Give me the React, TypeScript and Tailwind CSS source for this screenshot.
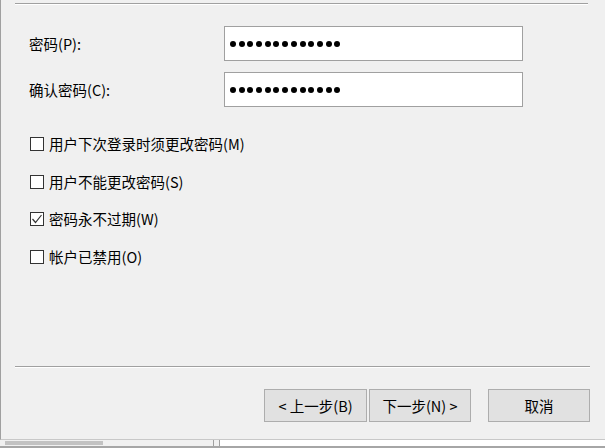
import React from "react";

const font = { fontFamily: '"Noto Sans CJK SC", "Noto Sans", sans-serif' };

function Dots() {
  return (
    <div className="flex items-center gap-[2.7px] pl-[5px]">
      {Array.from({ length: 13 }).map((_, i) => (
        <div key={i} className="w-[6px] h-[6px] rounded-full bg-black" />
      ))}
    </div>
  );
}

function Check({ checked, label }: { checked?: boolean; label: string }) {
  return (
    <div className="flex items-center h-[20px] pl-[29px]">
      <div className="w-[14px] h-[14px] border border-[#333333] bg-white flex items-center justify-center">
        {checked && (
          <svg width="12" height="12" viewBox="0 0 12 12">
            <polyline points="1.5,6 4.5,9.5 10.5,2" fill="none" stroke="#333333" strokeWidth="1.2" />
          </svg>
        )}
      </div>
      <span className="ml-[5px] text-[14.5px] text-black leading-none">{label}</span>
    </div>
  );
}

export default function App() {
  return (
    <div className="w-[605px] h-[448px] bg-[#f0f0f0] flex flex-col overflow-hidden" style={font}>
      <div className="h-[440px] border-l border-b border-l-[#a0a0a0] border-b-[#c8c8c8] flex flex-col">
        <div className="mt-[3px] ml-[14px] w-[573px] h-[2px] border-t border-[#a0a0a0] border-b border-b-white" />
        <div className="mt-[21px] flex items-center h-[35px]">
          <div className="w-[223px] pl-[28px] text-[14.5px] text-black">密码(P):</div>
          <div className="w-[299px] h-[35px] bg-white border border-[#a0a0a0] flex items-center">
            <Dots />
          </div>
        </div>
        <div className="mt-[11px] flex items-center h-[35px]">
          <div className="w-[223px] pl-[28px] text-[14.5px] text-black">确认密码(C):</div>
          <div className="w-[299px] h-[35px] bg-white border border-[#a0a0a0] flex items-center">
            <Dots />
          </div>
        </div>
        <div className="mt-[27px]">
          <Check label="用户下次登录时须更改密码(M)" />
        </div>
        <div className="mt-[18px]">
          <Check label="用户不能更改密码(S)" />
        </div>
        <div className="mt-[17px]">
          <Check checked label="密码永不过期(W)" />
        </div>
        <div className="mt-[18px]">
          <Check label="帐户已禁用(O)" />
        </div>
        <div className="mt-[99px] ml-[14px] w-[575px] h-[2px] border-t border-[#a0a0a0] border-b border-b-white" />
        <div className="mt-[21px] ml-[263px] flex">
          <button className="w-[103px] h-[33px] bg-[#e1e1e1] border border-[#adadad] text-[14.5px] text-black">
            &lt; 上一步(B)
          </button>
          <button className="ml-[2px] w-[102px] h-[33px] bg-[#e1e1e1] border border-[#adadad] text-[14.5px] text-black">
            下一步(N) &gt;
          </button>
          <button className="ml-[17px] w-[102px] h-[33px] bg-[#e1e1e1] border border-[#adadad] text-[14.5px] text-black">
            取消
          </button>
        </div>
      </div>
      <div className="h-[6px] flex">
        <div className="w-[213px] h-full bg-[#f0f0f0] pl-[5px] pt-[1px]">
          <div className="w-[98px] h-[4px] bg-[#c2c2c2]" />
        </div>
        <div className="w-[1px] h-full bg-[#a0a0a0]" />
        <div className="w-[5px] h-full bg-[#f0f0f0]" />
        <div className="w-[1px] h-full bg-[#a0a0a0]" />
        <div className="flex-1 h-full bg-white" />
      </div>
      <div className="h-[2px] bg-[#a6a6a6]" />
    </div>
  );
}
